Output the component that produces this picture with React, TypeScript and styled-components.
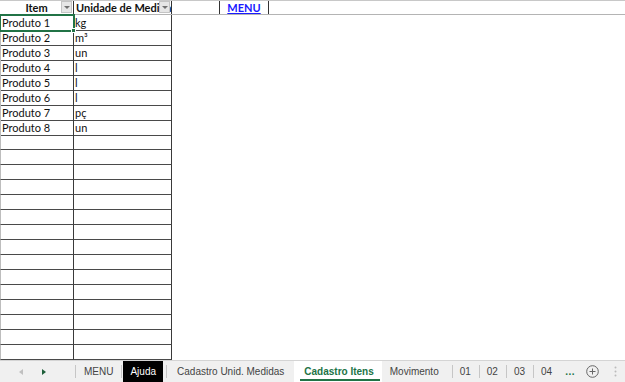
import React from "react";
import styled, { createGlobalStyle } from "styled-components";

const Global = createGlobalStyle`
  html, body { margin: 0; padding: 0; background: #fff; }
  #root { width: 625px; height: 382px; overflow: hidden; }
`;

const Page = styled.div`
  width: 625px;
  height: 382px;
  display: flex;
  flex-direction: column;
  background: #fff;
  font-family: Lato, "Liberation Sans", sans-serif;
`;

const Sheet = styled.div`
  flex: 1;
  overflow: hidden;
  display: flex;
  flex-direction: column;
`;

const HeaderRow = styled.div`
  display: grid;
  grid-template-columns: 74px 98px 48px 49px 1fr;
  height: 15px;
  flex: none;
  box-sizing: border-box;
  border-top: 1px solid #c8c8c8;
  border-bottom: 1px solid #b4b4b4;
`;

const HeadCell = styled.div<{ $align?: string; $line?: boolean }>`
  position: relative;
  box-sizing: border-box;
  border-right: 1px solid ${(p) => (p.$line ? "#333" : "transparent")};
  font-size: 11px;
  font-weight: 700;
  line-height: 13px;
  color: #111;
  text-align: ${(p) => p.$align || "left"};
  padding: 0 2px;
  overflow: hidden;
  white-space: nowrap;
`;

const FilterBtn = styled.span`
  position: absolute;
  right: 1px;
  top: 0px;
  width: 11px;
  height: 12px;
  box-sizing: border-box;
  background: #e6e6e6;
  border: 1px solid #c4c4c4;
  display: flex;
  align-items: center;
  justify-content: center;
  &::after {
    content: "";
    border-left: 3px solid transparent;
    border-right: 3px solid transparent;
    border-top: 3px solid #707070;
  }
`;

const MenuLink = styled.a`
  color: #1a1aff;
  text-decoration: underline;
  font-weight: 700;
  font-size: 11px;
  cursor: pointer;
`;

const DataRow = styled.div`
  display: grid;
  grid-template-columns: 74px 98px 1fr;
  height: 15px;
  flex: none;
`;

const Cell = styled.div<{ $first?: boolean; $selected?: boolean }>`
  position: relative;
  box-sizing: border-box;
  border-bottom: 1px solid #4a4a4a;
  border-right: 1px solid #3a3a3a;
  border-left: ${(p) => (p.$first ? "1px solid #bdbdbd" : "none")};
  font-size: 11px;
  line-height: 15px;
  color: #111;
  padding: 0 2px 0 1px;
  white-space: nowrap;
  overflow: visible;
  ${(p) =>
    p.$selected &&
    `
    outline: 2px solid #217346;
    outline-offset: -1px;
    z-index: 1;
  `}
`;

const Handle = styled.span`
  position: absolute;
  right: -3px;
  bottom: -3px;
  width: 5px;
  height: 5px;
  background: #217346;
  border: 1px solid #fff;
  box-sizing: border-box;
`;

const Empty = styled.div``;

const TabBar = styled.div`
  height: 21px;
  flex: none;
  background: #f0f0f0;
  border-top: 1px solid #d4d4d4;
  display: flex;
  align-items: stretch;
  overflow: hidden;
  font-family: "Liberation Sans", Arial, sans-serif;
  font-size: 10px;
  color: #444;
`;

const Nav = styled.div`
  width: 75px;
  flex: none;
  display: flex;
  align-items: center;
  padding-left: 19px;
  gap: 19px;
  box-sizing: border-box;
`;

const Arrow = styled.span<{ $dir: "l" | "r"; $on?: boolean }>`
  width: 0;
  height: 0;
  border-top: 3px solid transparent;
  border-bottom: 3px solid transparent;
  ${(p) =>
    p.$dir === "l"
      ? `border-right: 4px solid ${p.$on ? "#1e5f3a" : "#c0c0c0"};`
      : `border-left: 4px solid ${p.$on ? "#1e5f3a" : "#c0c0c0"};`}
`;

const Tab = styled.div<{ $active?: boolean; $dark?: boolean; $pl?: number; $pr?: number }>`
  position: relative;
  flex: none;
  display: flex;
  align-items: center;
  padding: 0 ${(p) => p.$pr ?? 8}px 0 ${(p) => p.$pl ?? 8}px;
  margin: ${(p) => (p.$dark ? "0 3px 0 1px" : "0")};
  white-space: nowrap;
  background: ${(p) => (p.$active ? "#fff" : p.$dark ? "#000" : "transparent")};
  color: ${(p) => (p.$active ? "#217346" : p.$dark ? "#fff" : "#444")};
  font-weight: ${(p) => (p.$active ? 700 : 400)};
  ${(p) =>
    p.$active &&
    `
    &::after {
      content: "";
      position: absolute;
      left: 6px; right: 2px; bottom: 1px;
      height: 2px;
      background: #217346;
    }
  `}
`;

const Sep = styled.span`
  flex: none;
  width: 1px;
  align-self: center;
  height: 13px;
  background: #c6c6c6;
`;

const More = styled.span`
  flex: none;
  color: #217346;
  font-weight: 700;
  display: flex;
  align-items: center;
  padding: 0 11px 0 5px;
  letter-spacing: 0.5px;
`;

const Icons = styled.div`
  flex: none;
  display: flex;
  align-items: center;
  gap: 15px;
  color: #777;
`;

const products = [
  ["Produto 1", "kg"],
  ["Produto 2", "m³"],
  ["Produto 3", "un"],
  ["Produto 4", "l"],
  ["Produto 5", "l"],
  ["Produto 6", "l"],
  ["Produto 7", "pç"],
  ["Produto 8", "un"],
];

export default function App() {
  const rows: string[][] = [...products];
  while (rows.length < 23) rows.push(["", ""]);
  return (
    <>
      <Global />
      <Page>
        <Sheet>
          <HeaderRow>
            <HeadCell $align="center" $line>
              Item
              <FilterBtn />
            </HeadCell>
            <HeadCell $line>
              Unidade de Medida
              <FilterBtn />
            </HeadCell>
            <HeadCell $line />
            <HeadCell $align="center" $line>
              <MenuLink>MENU</MenuLink>
            </HeadCell>
            <HeadCell />
          </HeaderRow>
          {rows.map((r, i) => (
            <DataRow key={i}>
              <Cell $first $selected={i === 0}>
                {r[0]}
                {i === 0 && <Handle />}
              </Cell>
              <Cell>{r[1]}</Cell>
              <Empty />
            </DataRow>
          ))}
        </Sheet>
        <TabBar>
          <Nav>
            <Arrow $dir="l" />
            <Arrow $dir="r" $on />
          </Nav>
          <Sep />
          <Tab>MENU</Tab>
          <Sep />
          <Tab $dark $pl={7} $pr={7}>Ajuda</Tab>
          <Sep />
          <Tab $pl={10} $pr={10}>Cadastro Unid. Medidas</Tab>
          <Tab $active $pl={10} $pr={8}>Cadastro Itens</Tab>
          <Tab $pl={8} $pr={13}>Movimento</Tab>
          <Sep />
          <Tab $pl={7}>01</Tab>
          <Sep />
          <Tab $pl={7}>02</Tab>
          <Sep />
          <Tab $pl={7}>03</Tab>
          <Sep />
          <Tab $pl={7}>04</Tab>
          <More>...</More>
          <Icons>
            <svg width="13" height="13" viewBox="0 0 13 13">
              <circle cx="6.5" cy="6.5" r="5.8" fill="none" stroke="#666" strokeWidth="1" />
              <path d="M6.5 3.5v6M3.5 6.5h6" stroke="#666" strokeWidth="1" />
            </svg>
            <svg width="3" height="11" viewBox="0 0 3 11">
              <circle cx="1.5" cy="1.5" r="1" fill="#bbb" />
              <circle cx="1.5" cy="5.5" r="1" fill="#bbb" />
              <circle cx="1.5" cy="9.5" r="1" fill="#bbb" />
            </svg>
          </Icons>
        </TabBar>
      </Page>
    </>
  );
}
